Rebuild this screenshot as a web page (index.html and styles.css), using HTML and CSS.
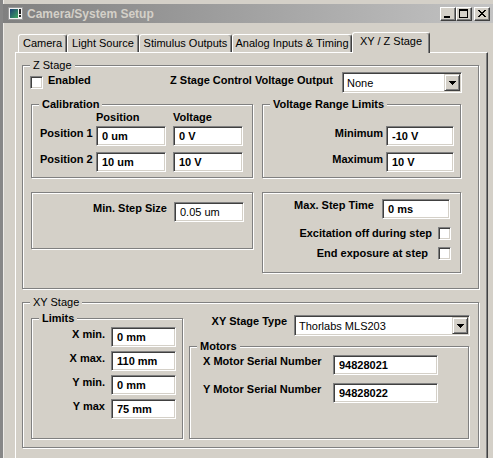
FILE: index.html
```html
<!DOCTYPE html>
<html>
<head>
<meta charset="utf-8">
<title>Camera/System Setup</title>
<link rel="stylesheet" href="styles.css">
</head>
<body>
<div class="window">
  <div class="titlebar">
    <svg class="app-icon" width="15" height="13" viewBox="0 0 15 13">
      <defs>
        <linearGradient id="ig" x1="0" y1="0" x2="1" y2="1">
          <stop offset="0" stop-color="#1d3d73"/>
          <stop offset="1" stop-color="#3fa860"/>
        </linearGradient>
      </defs>
      <rect x="0" y="0" width="15" height="13" fill="#f2f2f2"/>
      <rect x="0.5" y="0.5" width="14" height="12" fill="none" stroke="#9a9a9a"/>
      <rect x="2" y="2" width="8" height="9" fill="url(#ig)"/>
      <rect x="11" y="2" width="2" height="5" fill="#222"/>
      <rect x="11" y="8" width="2" height="2" fill="#222"/>
    </svg>
    <span class="title">Camera/System Setup</span>
    <div class="caption-btns">
      <span class="cbtn"><svg width="14" height="12" viewBox="0 0 14 12" shape-rendering="crispEdges"><rect x="3" y="8" width="6" height="2"/></svg></span>
      <span class="cbtn"><svg width="14" height="12" viewBox="0 0 14 12" shape-rendering="crispEdges"><rect x="2" y="1" width="9" height="2"/><rect x="2" y="1" width="1" height="9"/><rect x="10" y="1" width="1" height="9"/><rect x="2" y="9" width="9" height="1"/></svg></span>
      <span class="cbtn cbtn-close"><svg width="14" height="12" viewBox="0 0 14 12" shape-rendering="crispEdges"><rect x="3" y="2" width="2" height="1"/><rect x="9" y="2" width="2" height="1"/><rect x="4" y="3" width="2" height="1"/><rect x="8" y="3" width="2" height="1"/><rect x="5" y="4" width="4" height="1"/><rect x="6" y="5" width="2" height="1"/><rect x="5" y="6" width="4" height="1"/><rect x="4" y="7" width="2" height="1"/><rect x="8" y="7" width="2" height="1"/><rect x="3" y="8" width="2" height="1"/><rect x="9" y="8" width="2" height="1"/></svg></span>
    </div>
  </div>

  <div class="tabs">
    <div class="tab tab-camera">Camera</div>
    <div class="tab tab-light">Light Source</div>
    <div class="tab tab-stim">Stimulus Outputs</div>
    <div class="tab tab-analog">Analog Inputs &amp; Timing</div>
    <div class="tab tab-xyz active">XY / Z Stage</div>
  </div>

  <div class="page">
    <section class="group z-stage">
      <div class="legend">Z Stage</div>
      <div class="z-top">
        <span class="checkbox enabled-box"></span>
        <span class="lbl enabled-lbl">Enabled</span>
        <span class="lbl zcv-lbl">Z Stage Control Voltage Output</span>
        <div class="combo z-combo">
          <span class="combo-text">None</span>
          <span class="combo-btn"><svg width="7" height="4" viewBox="0 0 7 4" shape-rendering="crispEdges"><rect x="0" y="0" width="7" height="1"/><rect x="1" y="1" width="5" height="1"/><rect x="2" y="2" width="3" height="1"/><rect x="3" y="3" width="1" height="1"/></svg></span>
        </div>
      </div>

      <div class="z-grid">
        <section class="group calib">
          <div class="legend bold">Calibration</div>
          <div class="calib-grid">
            <span></span>
            <span class="lbl">Position</span>
            <span class="lbl">Voltage</span>
            <span class="lbl row-lbl">Position 1</span>
            <input class="field w70" type="text" value="0 um" readonly>
            <input class="field w70" type="text" value="0 V" readonly>
            <span class="lbl row-lbl">Position 2</span>
            <input class="field w70" type="text" value="10 um" readonly>
            <input class="field w70" type="text" value="10 V" readonly>
          </div>
        </section>

        <section class="group vrl">
          <div class="legend bold">Voltage Range Limits</div>
          <div class="vrl-grid">
            <span class="lbl row-lbl right">Minimum</span>
            <input class="field w68" type="text" value="-10 V" readonly>
            <span class="lbl row-lbl right">Maximum</span>
            <input class="field w68" type="text" value="10 V" readonly>
          </div>
        </section>

        <section class="group min-step">
          <div class="inline-row min-row">
            <span class="lbl">Min. Step Size</span>
            <input class="field w70 normal" type="text" value="0.05 um" readonly>
          </div>
        </section>

        <section class="group max-step">
          <div class="inline-row max-row">
            <span class="lbl">Max. Step Time</span>
            <input class="field w68" type="text" value="0 ms" readonly>
          </div>
          <div class="inline-row check-row check-row-1">
            <span class="lbl">Excitation off during step</span>
            <span class="checkbox"></span>
          </div>
          <div class="inline-row check-row check-row-2">
            <span class="lbl">End exposure at step</span>
            <span class="checkbox"></span>
          </div>
        </section>
      </div>
    </section>

    <section class="group xy-stage">
      <div class="legend">XY Stage</div>
      <div class="xy-body">
        <section class="group limits">
          <div class="legend bold">Limits</div>
          <div class="limits-grid">
            <span class="lbl row-lbl right">X min.</span>
            <input class="field w65" type="text" value="0 mm" readonly>
            <span class="lbl row-lbl right">X max.</span>
            <input class="field w65" type="text" value="110 mm" readonly>
            <span class="lbl row-lbl right">Y min.</span>
            <input class="field w65" type="text" value="0 mm" readonly>
            <span class="lbl row-lbl right">Y max</span>
            <input class="field w65" type="text" value="75 mm" readonly>
          </div>
        </section>

        <div class="xy-right">
          <div class="inline-row type-row">
            <span class="lbl">XY Stage Type</span>
            <div class="combo xy-combo">
              <span class="combo-text">Thorlabs MLS203</span>
              <span class="combo-btn"><svg width="7" height="4" viewBox="0 0 7 4" shape-rendering="crispEdges"><rect x="0" y="0" width="7" height="1"/><rect x="1" y="1" width="5" height="1"/><rect x="2" y="2" width="3" height="1"/><rect x="3" y="3" width="1" height="1"/></svg></span>
            </div>
          </div>
          <section class="group motors">
            <div class="legend bold">Motors</div>
            <div class="motors-grid">
              <span class="lbl">X Motor Serial Number</span>
              <input class="field w105" type="text" value="94828021" readonly>
              <span class="lbl">Y Motor Serial Number</span>
              <input class="field w105" type="text" value="94828022" readonly>
            </div>
          </section>
        </div>
      </div>
    </section>
  </div>
</div>
</body>
</html>
```

FILE: styles.css
```css
* { box-sizing: border-box; }

html, body {
  margin: 0;
  padding: 0;
  background: #d4d0c8;
}

body {
  font-family: "Liberation Sans", Arial, sans-serif;
  font-size: 11px;
  color: #000;
}

.window {
  width: 493px;
  height: 458px;
  overflow: hidden;
  border-left: 3px solid #878787;
  padding-top: 4px;
  box-shadow: inset 1px 0 #eeece8;
  background: #d4d0c8;
}

/* ---------- title bar ---------- */
.titlebar {
  height: 19px;
  display: flex;
  align-items: center;
  background: linear-gradient(to right, #808080, #c3c3c3);
}

.app-icon {
  flex: none;
  margin-left: 5px;
}

.title {
  margin-left: 4px;
  font-weight: bold;
  font-size: 12px;
  line-height: 19px;
  padding-top: 1px;
  color: #d4d0c8;
}

.caption-btns {
  margin-left: auto;
  margin-right: 3px;
  display: flex;
}

.cbtn {
  width: 16px;
  height: 14px;
  background: #d4d0c8;
  border: 1px solid;
  border-color: #fff #404040 #404040 #fff;
  box-shadow: inset -1px -1px #808080;
  display: flex;
}

.cbtn svg { fill: #000; }

.cbtn-close { margin-left: 2px; }

/* ---------- tabs ---------- */
.tabs {
  display: flex;
  align-items: flex-end;
  height: 21px;
  margin: 9px 0 -1px 15px;
}

.tab {
  height: 18px;
  margin-bottom: 1px;
  border: 1px solid #fff;
  border-bottom: none;
  border-right-color: #404040;
  border-radius: 3px 3px 0 0;
  box-shadow: inset -1px 0 #808080;
  background: #d4d0c8;
  text-align: center;
  line-height: 17px;
  white-space: nowrap;
}

.tab.active {
  height: 21px;
  margin-bottom: 0;
  position: relative;
  z-index: 1;
}

.tab-camera { width: 49px; }
.tab-light { width: 72px; }
.tab-stim { width: 93px; }
.tab-analog { width: 120px; }
.tab-xyz { width: 78px; }

/* ---------- page ---------- */
.page {
  margin-left: 12px;
  width: 473px;
  height: 420px;
  border: 1px solid #fff;
  border-right-color: #404040;
  border-bottom: none;
  box-shadow: inset -1px 0 #808080;
  padding: 12px 0 0 6px;
}

/* ---------- group boxes ---------- */
.group {
  border: 1px solid #808080;
  box-shadow: inset 1px 1px #fff, 1px 1px #fff;
}

.legend {
  width: fit-content;
  margin: -7px 0 0 7px;
  padding: 0 3px;
  line-height: 13px;
  height: 13px;
  background: #d4d0c8;
  white-space: nowrap;
}

.bold, .lbl { font-weight: bold; }

.lbl {
  line-height: 13px;
  white-space: nowrap;
}

.row-lbl { margin-top: 1px; }
.right { text-align: right; }

/* ---------- fields ---------- */
.field {
  display: block;
  height: 20px;
  margin: 0;
  border: 1px solid;
  border-color: #808080 #fff #fff #808080;
  box-shadow: inset 1px 1px #404040, inset -1px -1px #d4d0c8;
  background: #fff;
  padding: 0 0 0 5px;
  font: bold 11px "Liberation Sans", Arial, sans-serif;
  color: #000;
  outline: none;
}

.field.normal { font-weight: normal; }

.w65 { width: 65px; }
.w68 { width: 68px; }
.w70 { width: 70px; }
.w105 { width: 105px; }

.checkbox {
  display: block;
  flex: none;
  width: 13px;
  height: 13px;
  background: #fff;
  border: 1px solid;
  border-color: #808080 #fff #fff #808080;
  box-shadow: inset 1px 1px #404040, inset -1px -1px #d4d0c8;
}

.combo {
  height: 21px;
  display: flex;
  background: #fff;
  border: 1px solid;
  border-color: #808080 #fff #fff #808080;
  box-shadow: inset 1px 1px #404040, inset -1px -1px #d4d0c8;
  padding: 1px;
}

.combo-text {
  flex: 1;
  padding: 3px 0 0 3px;
  line-height: 13px;
  white-space: nowrap;
}

.combo-btn {
  width: 16px;
  height: 17px;
  background: #d4d0c8;
  border: 1px solid;
  border-color: #d4d0c8 #404040 #404040 #d4d0c8;
  box-shadow: inset 1px 1px #fff, inset -1px -1px #808080;
  display: flex;
  align-items: center;
  justify-content: center;
}

.combo-btn svg { fill: #000; margin-top: 1px; }

.inline-row {
  display: flex;
  justify-content: flex-end;
  align-items: flex-start;
}

/* ---------- Z stage ---------- */
.z-stage {
  width: 457px;
  height: 224px;
}

.z-top {
  display: flex;
  align-items: flex-start;
  height: 21px;
}

.enabled-box { margin: 4px 0 0 7px; }
.enabled-lbl { margin: 2px 0 0 5px; }
.zcv-lbl { margin: 2px 9px 0 auto; }
.z-combo { width: 120px; margin-right: 16px; }

.z-grid {
  display: grid;
  grid-template-columns: 222px 199px;
  column-gap: 9px;
  row-gap: 14px;
  align-items: start;
  margin: 11px 0 0 8px;
}

.calib, .vrl { height: 74px; }

.calib-grid {
  display: grid;
  grid-template-columns: 56px 77px 70px;
  grid-template-rows: 15px 26px 20px;
  align-items: start;
  padding-left: 8px;
}

.vrl-grid {
  display: grid;
  grid-template-columns: 123px 68px;
  grid-template-rows: 26px 20px;
  align-items: start;
  margin-top: 15px;
}

.vrl-grid .lbl { padding-right: 3px; }

.min-step { height: 57px; }

.min-row { padding: 9px 8px 0 0; }
.min-row .lbl { margin-right: 7px; }

.max-step { height: 81px; }

.max-row { padding: 6px 10px 0 0; }
.max-row .lbl { margin-right: 8px; }

.check-row { padding-right: 9px; }
.check-row-1 { margin-top: 8px; }
.check-row-1 .lbl { margin-right: 6px; }
.check-row-2 { margin-top: 7px; }
.check-row-2 .lbl { margin-right: 10px; }

/* ---------- XY stage ---------- */
.xy-stage {
  width: 457px;
  height: 146px;
  margin-top: 13px;
}

.xy-body {
  display: flex;
  align-items: flex-start;
}

.limits {
  width: 152px;
  height: 121px;
  margin: 9px 0 0 8px;
}

.limits-grid {
  display: grid;
  grid-template-columns: 73px 65px;
  column-gap: 6px;
  grid-auto-rows: 24px;
  align-items: start;
  margin-top: 2px;
}

.xy-right {
  width: 281px;
  margin: 6px 0 0 6px;
}

.type-row .lbl { margin-right: 7px; }
.xy-combo { width: 176px; }

.motors {
  width: 280px;
  height: 93px;
  margin-top: 10px;
}

.motors-grid {
  display: grid;
  grid-template-columns: 130px 105px;
  grid-template-rows: 28px 20px;
  align-items: start;
  padding-left: 13px;
  margin-top: 2px;
}
```
